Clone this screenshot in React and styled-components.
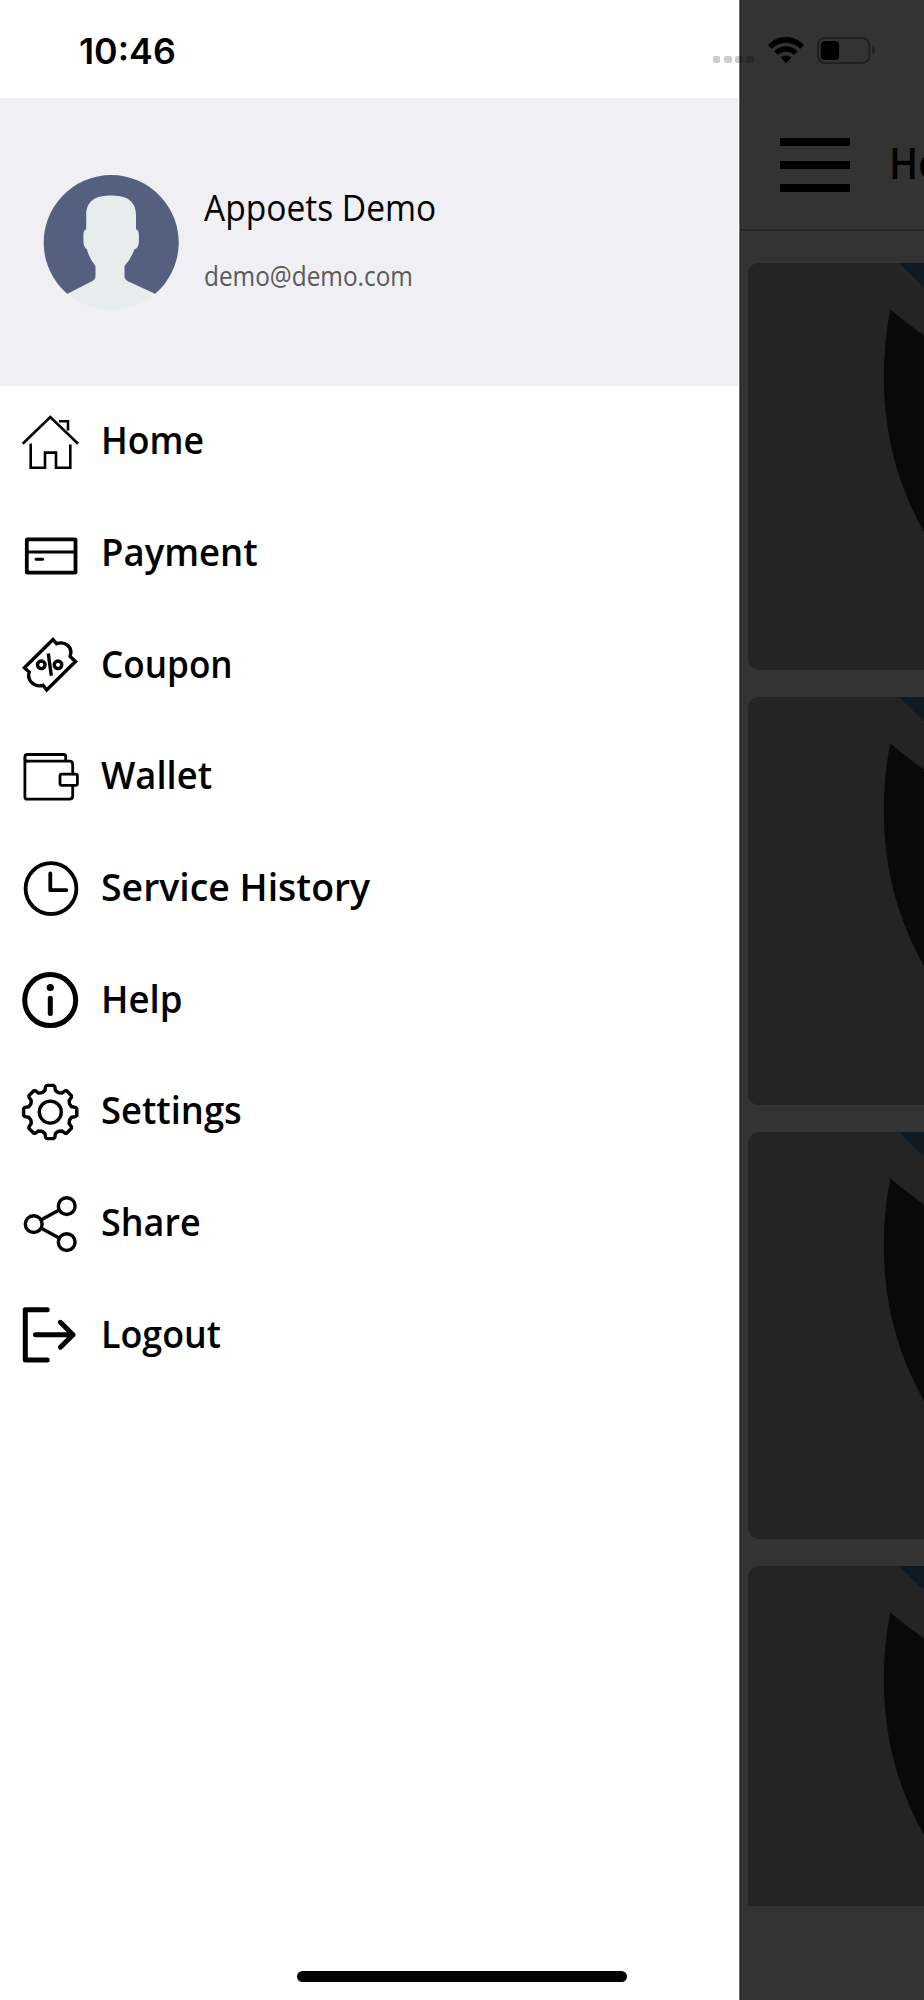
import { useLayoutEffect, useRef, useState } from "react";
import styled, { createGlobalStyle } from "styled-components";

const GlobalStyle = createGlobalStyle`
  * {
    box-sizing: border-box;
  }

  body {
    margin: 0;
    background: #333333;
    font-family: "Open Sans", "Noto Sans", sans-serif;
  }
`;

const Screen = styled.div`
  position: relative;
  display: flex;
  width: 924px;
  height: 2000px;
  overflow: hidden;
`;

const StatusBar = styled.div`
  position: absolute;
  top: 0;
  left: 0;
  right: 0;
  z-index: 2;
  display: flex;
  align-items: center;
  height: 98px;
  padding: 3px 49px 0 79px;
`;

const Time = styled.div`
  flex: 1;
  font-family: Inter, "Liberation Sans", sans-serif;
  font-size: 35px;
  font-weight: 600;
  line-height: 44px;
  color: #000000;
`;

const SignalDots = styled.div`
  display: flex;
  gap: 3.6px;
  margin: 18px 13.5px 0 0;
`;

const SignalDot = styled.span`
  width: 7.6px;
  height: 7.6px;
  border-radius: 2px;
  background: rgba(0, 0, 0, 0.2);
`;

const WifiIcon = styled.svg`
  width: 36px;
  height: 27px;
  margin-right: 13.5px;
`;

const BatteryIcon = styled.svg`
  width: 58px;
  height: 27px;
`;

const Drawer = styled.aside`
  display: flex;
  flex-direction: column;
  flex: none;
  width: 739px;
  padding-top: 98px;
  background: #ffffff;
`;

const Profile = styled.header`
  display: flex;
  align-items: center;
  width: 738px;
  height: 288px;
  padding-left: 43px;
  background: #efeff4;
`;

const Avatar = styled.svg`
  width: 136px;
  height: 136px;
  margin-top: 1px;
`;

const ProfileText = styled.div`
  display: flex;
  flex-direction: column;
  gap: 18px;
  padding: 0 0 2px 25px;
`;

const UserName = styled.div`
  font-size: 37px;
  line-height: 50px;
  color: #000000;
`;

const UserEmail = styled.div`
  font-size: 28px;
  line-height: 50px;
  color: #5a5a5c;
`;

const Menu = styled.nav`
  display: flex;
  flex-direction: column;
`;

const MenuItem = styled.a`
  display: flex;
  align-items: center;
  height: 111.7px;
  padding-left: 22px;
  color: #000000;
`;

const MenuIcon = styled.svg`
  flex: none;
  width: 56px;
  height: 56px;
  margin-right: 23px;
  overflow: visible;
  fill: none;
  stroke: #000000;
  stroke-width: ${({ $stroke }) => $stroke}px;
  stroke-linecap: ${({ $cap }) => $cap || "round"};
  stroke-linejoin: ${({ $join }) => $join || "round"};
`;

const MenuLabel = styled.div`
  padding-bottom: 3px;
  font-size: 37px;
  font-weight: 600;
  line-height: 50px;
`;

const FitBox = styled.span`
  display: inline-block;
  transform-origin: left center;
  white-space: nowrap;
`;

const Page = styled.main`
  flex: 1;
  min-width: 0;
  padding-top: 98px;
  border-left: 1px solid #727272;
  box-shadow: inset 1px 0 0 #242424;
  overflow: hidden;
`;

const TopBar = styled.div`
  display: flex;
  align-items: center;
  gap: 39px;
  height: 133px;
  padding-left: 40px;
  border-bottom: 2px solid #282828;
`;

const Burger = styled.div`
  display: flex;
  flex: none;
  flex-direction: column;
  gap: 15px;
  width: 70px;
  margin-top: 2px;
`;

const BurgerLine = styled.span`
  height: 8px;
  background: #000000;
`;

const PageTitle = styled.div`
  padding-bottom: 1px;
  font-size: 43px;
  font-weight: 600;
  line-height: 60px;
  white-space: nowrap;
  color: #000000;
`;

const CardList = styled.div`
  display: flex;
  flex-direction: column;
  gap: 27px;
  height: 1675px;
  padding: 32px 0 0 8px;
  overflow: hidden;
`;

const Card = styled.div`
  flex: none;
  height: 407.4px;
  border-radius: 11px 0 0 11px;
  background: #242424;
  overflow: hidden;
`;

const CardArt = styled.svg`
  display: block;
  width: 176px;
  height: 407px;
`;

const HomeIndicator = styled.div`
  position: absolute;
  left: 297px;
  bottom: 18px;
  width: 330px;
  height: 11px;
  border-radius: 6px;
  background: #000000;
`;

const toothPoints = [
  [-7.6, -19.6],
  [-5.2, -21.6],
  [-4.6, -25.4],
  [-3.4, -26.6],
  [3.4, -26.6],
  [4.6, -25.4],
  [5.2, -21.6],
  [7.6, -19.6],
];

// eight teeth, each one the same outline turned by 45 degrees
const gearPath = () => {
  const points = [];
  for (let i = 0; i < 8; i++) {
    const a = (i * Math.PI) / 4;
    toothPoints.forEach(([x, y]) => {
      const px = x * Math.cos(a) - y * Math.sin(a) + 28.2;
      const py = x * Math.sin(a) + y * Math.cos(a) + 28;
      points.push(`${px.toFixed(2)} ${py.toFixed(2)}`);
    });
  }
  return `M${points.join("L")}Z`;
};

const menuItems = [
  {
    label: "Home",
    width: 103,
    stroke: 2.6,
    cap: "butt",
    join: "miter",
    icon: (
      <>
        <path d="M.7 29.8 28.3 3.1 56 29.8" />
        <path d="M37 7.3H46V16.5" />
        <path d="M8.7 29.5V53.7H23V38.6H34V53.7H48.3V30.5" />
      </>
    ),
  },
  {
    label: "Payment",
    width: 157,
    stroke: 3.8,
    icon: (
      <>
        <rect x="4.8" y="13.3" width="48.7" height="33.3" rx="0.6" />
        <path d="M5 26H53.5" strokeWidth="3" />
        <path d="M14.2 33.2H20.6" strokeWidth="3" />
      </>
    ),
  },
  {
    label: "Coupon",
    width: 132,
    stroke: 3.4,
    join: "miter",
    cap: "butt",
    icon: (
      <>
        <path d="M31 2.6 34.6 6.7C43 3.7 51.3 10 48.1 19.4L53.5 24.5 24.7 53 21 48.3C12.5 50.8 4.5 43.7 7.2 35.1L2.4 30.8Z" />
        <circle cx="19.3" cy="27.8" r="3.8" />
        <circle cx="36" cy="27.8" r="3.8" />
        <path d="M26.3 16.5 29.3 38.7" />
      </>
    ),
  },
  {
    label: "Wallet",
    width: 111,
    stroke: 2.8,
    icon: (
      <>
        <path d="M5.2 12.2H47.5Q50.7 12.2 50.7 15.5V25M50.7 36.5V47Q50.7 50.2 47.5 50.2H5.2Q2.9 50.2 2.9 48V8Q2.9 5.5 5.2 5.5H41.6Q43.7 5.5 43.7 7.6V12" />
        <path d="M5.2 12.2Q3 12.2 3 10" />
        <rect x="38" y="25.2" width="17.4" height="11.1" rx="1.8" />
      </>
    ),
  },
  {
    label: "Service History",
    width: 269,
    stroke: 3.8,
    icon: (
      <>
        <circle cx="29" cy="27.6" r="25.4" />
        <path d="M28.3 12.4V29.2H44.3" />
      </>
    ),
  },
  {
    label: "Help",
    width: 81,
    stroke: 5,
    icon: (
      <>
        <circle cx="28.2" cy="28.1" r="25.5" />
        <circle cx="28.3" cy="15.5" r="3.6" fill="#000000" stroke="none" />
        <path d="M28.3 26.3V41.6" />
      </>
    ),
  },
  {
    label: "Settings",
    width: 140.5,
    stroke: 3.4,
    icon: (
      <>
        <path d={gearPath()} />
        <circle cx="28.3" cy="28.1" r="11" />
      </>
    ),
  },
  {
    label: "Share",
    width: 100,
    stroke: 3.4,
    icon: (
      <>
        <circle cx="11.7" cy="28.1" r="8.4" />
        <circle cx="44.7" cy="10.1" r="8.4" />
        <circle cx="44.7" cy="46.1" r="8.4" />
        <path d="M19.3 23.8 37.2 14.1M19.3 32.3 37.2 42.1" />
      </>
    ),
  },
  {
    label: "Logout",
    width: 120,
    stroke: 5,
    icon: (
      <>
        <path d="M25.2 2.7H3.3V53H25.2" />
        <path d="M13.5 27.7H51M38.4 15.3 51 27.7 38.4 40.2" />
      </>
    ),
  },
];

// squeezes one line of text to the given width
function FitText({ width, children }) {
  const ref = useRef(null);
  const [scale, setScale] = useState(1);

  useLayoutEffect(() => {
    setScale(width / ref.current.offsetWidth);
  }, [width, children]);

  return (
    <FitBox ref={ref} style={{ transform: `scaleX(${scale})` }}>
      {children}
    </FitBox>
  );
}

function ServiceCard() {
  return (
    <Card>
      <CardArt viewBox="0 0 176 407">
        <path d="M151 0H176V24.5Z" fill="#101a22" />
        <path
          d="M142.3 46.3C133 93 134 140 143 183C150 215 162 244 176 269V72.5Q158 60 142.3 46.3Z"
          fill="#090909"
        />
      </CardArt>
    </Card>
  );
}

function App() {
  return (
    <>
      <GlobalStyle />
      <Screen>
        <StatusBar>
          <Time>
            <FitText width={97}>10:46</FitText>
          </Time>
          <SignalDots>
            {[0, 1, 2, 3].map((dot) => (
              <SignalDot key={dot} />
            ))}
          </SignalDots>
          <WifiIcon viewBox="0 0 36 27">
            <path d="M0 8C10-2.6 26-2.6 36 8L32.3 11.7C24 3.7 12 3.7 3.7 11.7Z" />
            <path d="M6.2 14.2C13 7.5 23 7.5 29.8 14.2L26 17.9C21.3 13.6 14.7 13.6 10 17.9Z" />
            <path d="M12.6 20.6C15.8 17.9 20.2 17.9 23.4 20.6L18 26.3Z" />
          </WifiIcon>
          <BatteryIcon viewBox="0 0 58 27">
            <rect
              x="1"
              y="1"
              width="51.3"
              height="25"
              rx="7"
              fill="none"
              stroke="#202020"
              strokeWidth="2"
            />
            <rect x="3.8" y="4" width="18.3" height="19" rx="4" />
            <path d="M55.2 9.3Q58 10.5 58 13.6T55.2 18Z" fill="#202020" />
          </BatteryIcon>
        </StatusBar>

        <Drawer>
          <Profile>
            <Avatar viewBox="0 0 136 136">
              <path
                d="M24.5 119A67.5 67.5 0 1 1 111.9 119Z"
                fill="#556080"
              />
              <path
                d="M68 20.5C80 20.5 93 23.5 93 40V54.2Q95.9 55 95.9 60V66Q95.9 73 91.2 74.5Q88 84 81.5 91V101Q81.5 104.5 85.5 106.5L112 118.8A67.5 67.5 0 0 1 24.4 118.8L48.5 106.5Q52.5 104.5 52.5 101V91Q46.5 84 44 74.5Q40.4 72 40.4 66V60Q40.4 55 43.2 54.2V40C43.2 23.5 56 20.5 68 20.5Z"
                fill="#e7eced"
              />
            </Avatar>
            <ProfileText>
              <UserName>
                <FitText width={232}>Appoets Demo</FitText>
              </UserName>
              <UserEmail>
                <FitText width={209}>demo@demo.com</FitText>
              </UserEmail>
            </ProfileText>
          </Profile>
          <Menu>
            {menuItems.map((item) => (
              <MenuItem key={item.label}>
                <MenuIcon
                  viewBox="0 0 56 56"
                  $stroke={item.stroke}
                  $cap={item.cap}
                  $join={item.join}
                >
                  {item.icon}
                </MenuIcon>
                <MenuLabel>
                  <FitText width={item.width}>{item.label}</FitText>
                </MenuLabel>
              </MenuItem>
            ))}
          </Menu>
        </Drawer>

        <Page>
          <TopBar>
            <Burger>
              <BurgerLine />
              <BurgerLine />
              <BurgerLine />
            </Burger>
            <PageTitle>
              <FitText width={112}>Home</FitText>
            </PageTitle>
          </TopBar>
          <CardList>
            {[1, 2, 3, 4].map((card) => (
              <ServiceCard key={card} />
            ))}
          </CardList>
        </Page>
        <HomeIndicator />
      </Screen>
    </>
  );
}

export default App;
